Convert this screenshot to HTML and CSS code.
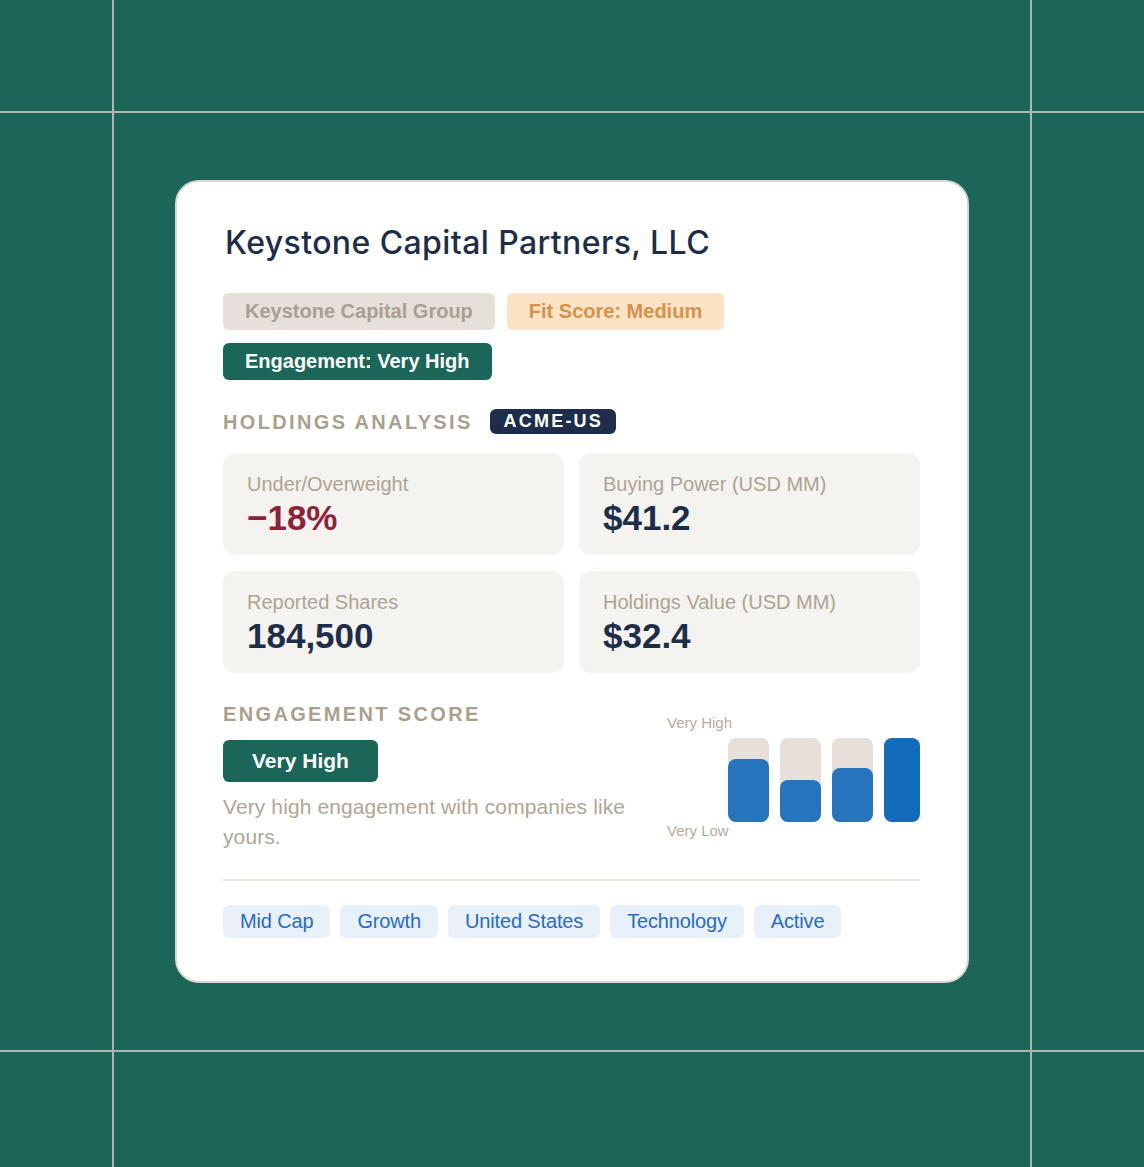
FILE: index.html
```html
<!DOCTYPE html>
<html lang="en">
  <head>
    <meta charset="UTF-8" />
    <meta name="viewport" content="width=device-width, initial-scale=1" />
    <title>Keystone Capital Partners</title>
    <link rel="stylesheet" href="styles.css">
  </head>
  <body>
    <div class="card">
      <h1 class="title">Keystone Capital Partners, LLC</h1>

      <div class="badges">
        <span class="badge badge-parent">Keystone Capital Group</span>
        <span class="badge badge-fit">Fit Score: Medium</span>
        <span class="badge badge-engage">Engagement: Very High</span>
      </div>

      <div class="section-head">
        <span class="section-title">Holdings Analysis</span>
        <span class="ticker">ACME-US</span>
      </div>

      <div class="metrics">
        <div class="metric">
          <div class="metric-label">Under/Overweight</div>
          <div class="metric-value negative">&minus;18%</div>
        </div>
        <div class="metric">
          <div class="metric-label">Buying Power (USD MM)</div>
          <div class="metric-value">$41.2</div>
        </div>
        <div class="metric">
          <div class="metric-label">Reported Shares</div>
          <div class="metric-value">184,500</div>
        </div>
        <div class="metric">
          <div class="metric-label">Holdings Value (USD MM)</div>
          <div class="metric-value">$32.4</div>
        </div>
      </div>

      <div class="engagement">
        <div class="engagement-info">
          <div class="section-title">Engagement Score</div>
          <div class="score-pill">Very High</div>
          <p class="engagement-text">Very high engagement with companies like yours.</p>
        </div>
        <div class="chart">
          <div class="chart-labels">
            <span>Very High</span>
            <span>Very Low</span>
          </div>
          <div class="bars">
            <div class="bar"><div class="bar-fill" style="height: 75%"></div></div>
            <div class="bar"><div class="bar-fill" style="height: 50%"></div></div>
            <div class="bar"><div class="bar-fill" style="height: 64%"></div></div>
            <div class="bar bar-last"><div class="bar-fill full" style="height: 100%"></div></div>
          </div>
        </div>
      </div>

      <div class="tags">
        <span class="tag">Mid Cap</span>
        <span class="tag">Growth</span>
        <span class="tag">United States</span>
        <span class="tag">Technology</span>
        <span class="tag">Active</span>
      </div>
    </div>
  </body>
</html>
```

FILE: styles.css
```css
html,
body {
  margin: 0;
  padding: 0;
}

body {
  height: 1167px;
  display: flex;
  align-items: center;
  justify-content: center;
  font-family: "Liberation Sans", Arial, sans-serif;
  background-color: #1b6658;
  background-image: linear-gradient(#b0b5ae, #b0b5ae), linear-gradient(#b0b5ae, #b0b5ae),
    linear-gradient(#b0b5ae, #b0b5ae), linear-gradient(#b0b5ae, #b0b5ae);
  background-size: 2px 100%, 2px 100%, 100% 2px, 100% 2px;
  background-position: 112px 0, 1030px 0, 0 111px, 0 1050px;
  background-repeat: no-repeat;
}

.card {
  width: 697px;
  padding: 41px 47px 43px 46px;
  background: #fff;
  border: 2px solid #ddd7cf;
  border-radius: 24px;
  margin-top: -4px;
}

.title {
  margin: 0;
  font-family: Inter, "Noto Sans", sans-serif;
  font-weight: 500;
  font-size: 32px;
  line-height: 40px;
  color: #1e2d4a;
  letter-spacing: 0.4px;
  padding-left: 2px;
}

.badges {
  display: flex;
  flex-wrap: wrap;
  gap: 13px 12px;
  margin-top: 30px;
}

.badge {
  display: inline-block;
  padding: 7px 22px;
  font-size: 20px;
  line-height: 23px;
  font-weight: bold;
  border-radius: 6px;
}

.badge-parent {
  background: #e6e0d8;
  color: #a99f94;
}

.badge-fit {
  background: #fde3c6;
  color: #d6914b;
}

.badge-engage {
  background: #1b6658;
  color: #fff;
}

.section-head {
  display: flex;
  align-items: center;
  gap: 17px;
  margin-top: 29px;
}

.section-title {
  font-size: 20px;
  line-height: 24px;
  font-weight: bold;
  letter-spacing: 2.35px;
  text-transform: uppercase;
  color: #aa9f8f;
}

.ticker {
  background: #1e2d4a;
  color: #fff;
  font-size: 18px;
  line-height: 25px;
  font-weight: bold;
  letter-spacing: 2.2px;
  padding: 0 13px 0 14px;
  border-radius: 6px;
}

.metrics {
  display: grid;
  grid-template-columns: 1fr 1fr;
  gap: 16px 15px;
  margin-top: 19px;
}

.metric {
  background: #f5f3f0;
  border-radius: 12px;
  padding: 19px 24px 17px;
}

.metric-label {
  font-size: 20px;
  line-height: 24px;
  color: #aea393;
}

.metric-value {
  margin-top: 2px;
  font-size: 35px;
  line-height: 40px;
  font-weight: bold;
  color: #1e2d4a;
}

.metric-value.negative {
  color: #8c2339;
}

.engagement {
  display: flex;
  align-items: center;
  justify-content: space-between;
  margin-top: 29px;
}

.engagement-info {
  width: 420px;
}

.score-pill {
  display: inline-block;
  margin-top: 14px;
  padding: 0 29px;
  height: 42px;
  line-height: 42px;
  font-size: 21px;
  font-weight: bold;
  color: #fff;
  background: #1b6658;
  border-radius: 6px;
}

.engagement-text {
  margin: 10px 0 0;
  font-size: 21px;
  line-height: 30px;
  letter-spacing: 0.1px;
  color: #b0a595;
}

.chart {
  display: flex;
  width: 253px;
}

.chart-labels {
  width: 61px;
  height: 126px;
  display: flex;
  flex-direction: column;
  justify-content: space-between;
  font-size: 15px;
  line-height: 18px;
  color: #b5ab9c;
  white-space: nowrap;
}

.bars {
  display: flex;
  gap: 11px;
  height: 84px;
  margin-top: 24px;
}

.bar {
  width: 41px;
  background: #e6e0d8;
  border-radius: 8px;
  display: flex;
  align-items: flex-end;
}

.bar-last {
  width: 36px;
}

.bar-fill {
  width: 100%;
  background: #2874bc;
  border-radius: 8px;
}

.bar-fill.full {
  background: #136bbc;
}

.tags {
  display: flex;
  gap: 10px;
  margin-top: 27px;
  padding-top: 24px;
  border-top: 2px solid #e8e3dc;
}

.tag {
  padding: 0 17px;
  height: 33px;
  line-height: 33px;
  font-size: 20px;
  letter-spacing: -0.15px;
  color: #2a6bbf;
  background: #e8f0fa;
  border-radius: 6px;
}
```
